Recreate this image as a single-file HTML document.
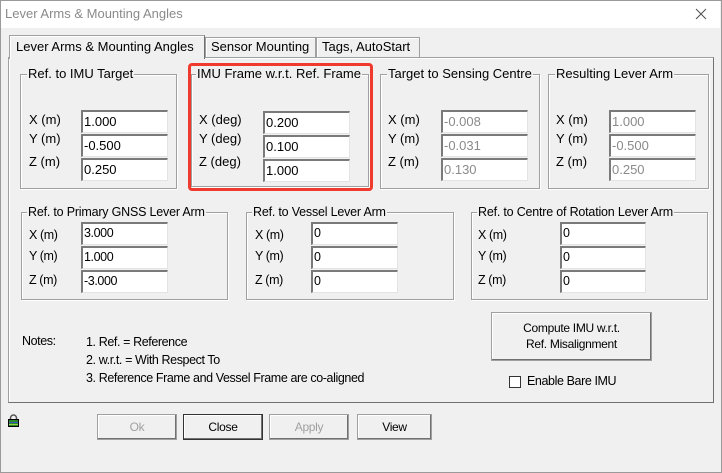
<!DOCTYPE html>
<html><head><meta charset="utf-8"><style>
*{margin:0;padding:0;box-sizing:border-box}
body{width:722px;height:473px;background:#f0f0f0;font-family:"Liberation Sans",Arial,sans-serif;position:relative;overflow:hidden;color:#000}
.a{position:absolute;white-space:nowrap}
.win{position:absolute;left:0;top:0;width:722px;height:473px;border:1px solid #9a9a9a}
.title{position:absolute;left:1px;top:1px;width:719px;height:27px;background:#fff}
.grp{position:absolute;border:1px solid #a0a0a0;box-shadow:1px 1px 0 #fff inset,1px 1px 0 #fff}
.lg{position:absolute;top:-8px;left:6px;background:#f0f0f0;font-size:13px;line-height:14px;padding:0 1px}
.g2 .lg{font-size:12.5px;letter-spacing:-0.2px}
.f{position:absolute;height:23px;background:#fff;border-top:2px solid #7a7a7a;border-left:2px solid #7a7a7a;border-right:1px solid #e3e3e3;border-bottom:1px solid #e3e3e3;font-size:13px;line-height:19px;padding-left:1px}
.dis{color:#8a8a8a}
.l{position:absolute;font-size:13px;white-space:nowrap}
.tab{position:absolute;background:#f0f0f0;border:1px solid #a0a0a0;border-bottom:none;font-size:13px;line-height:18px;padding-left:5px;box-shadow:1px 1px 0 #fff inset}
.btn{position:absolute;height:26px;border:1px solid #a0a0a0;box-shadow:inset -1px -1px 0 #707070,inset 1px 1px 0 #fff;font-size:12px;text-align:center;line-height:24px;letter-spacing:-0.3px}
.sm{font-size:12.5px;letter-spacing:-0.4px}
</style></head><body>
<div class="win"></div>
<div class="title"></div>
<div class="a" style="left:5px;top:6px;font-size:13px;color:#8a8a8a">Lever Arms &amp; Mounting Angles</div>
<svg class="a" style="left:695px;top:8px" width="12" height="12"><path d="M1 1L11 11M11 1L1 11" stroke="#555" stroke-width="1.1"/></svg>

<div class="a" style="left:8px;top:57px;width:706px;height:346px;border:1px solid #a0a0a0;border-right-color:#707070;border-bottom-color:#707070;box-shadow:inset 1px 1px 0 #fff"></div>
<div class="tab" style="left:205px;top:37px;width:111px;height:20px">Sensor Mounting</div>
<div class="tab" style="left:316px;top:37px;width:104px;height:20px">Tags, AutoStart</div>
<div class="tab" style="left:9px;top:35px;width:196px;height:24px;z-index:2;line-height:22px;padding-left:6px;border-right-color:#707070">Lever Arms &amp; Mounting Angles</div>

<div class="grp" style="left:20px;top:74px;width:157px;height:115px"><div class="lg">Ref. to IMU Target</div></div>
<div class="l" style="left:29px;top:112px">X (m)</div><div class="l" style="left:29px;top:131px">Y (m)</div><div class="l" style="left:29px;top:154px">Z (m)</div>
<div class="f" style="left:81px;top:110px;width:87px">1.000</div>
<div class="f" style="left:81px;top:134px;width:87px">-0.500</div>
<div class="f" style="left:81px;top:158px;width:87px">0.250</div>

<div class="grp" style="left:191px;top:74px;width:178px;height:113px"><div class="lg" style="left:4px">IMU Frame w.r.t. Ref. Frame</div></div>
<div class="l" style="left:199px;top:112px">X (deg)</div><div class="l" style="left:199px;top:131px">Y (deg)</div><div class="l" style="left:199px;top:154px">Z (deg)</div>
<div class="f" style="left:263px;top:111px;width:87px">0.200</div>
<div class="f" style="left:263px;top:135px;width:87px">0.100</div>
<div class="f" style="left:263px;top:159px;width:87px">1.000</div>
<div class="a" style="left:188px;top:63px;width:185px;height:128px;border:3px solid #f03a2e;border-radius:4px"></div>

<div class="grp" style="left:380px;top:74px;width:160px;height:115px"><div class="lg">Target to Sensing Centre</div></div>
<div class="l" style="left:388px;top:112px">X (m)</div><div class="l" style="left:388px;top:131px">Y (m)</div><div class="l" style="left:388px;top:154px">Z (m)</div>
<div class="f dis" style="left:441px;top:110px;width:87px">-0.008</div>
<div class="f dis" style="left:441px;top:134px;width:87px">-0.031</div>
<div class="f dis" style="left:441px;top:158px;width:87px">0.130</div>

<div class="grp" style="left:548px;top:74px;width:161px;height:115px"><div class="lg">Resulting Lever Arm</div></div>
<div class="l" style="left:556px;top:112px">X (m)</div><div class="l" style="left:556px;top:131px">Y (m)</div><div class="l" style="left:556px;top:154px">Z (m)</div>
<div class="f dis" style="left:609px;top:110px;width:87px">1.000</div>
<div class="f dis" style="left:609px;top:134px;width:87px">-0.500</div>
<div class="f dis" style="left:609px;top:158px;width:87px">0.250</div>

<div class="grp g2" style="left:21px;top:212px;width:207px;height:88px"><div class="lg" style="left:5px">Ref. to Primary GNSS Lever Arm</div></div>
<div class="l sm" style="left:29px;top:228px">X (m)</div><div class="l sm" style="left:29px;top:249px">Y (m)</div><div class="l sm" style="left:29px;top:273px">Z (m)</div>
<div class="f sm" style="left:81px;top:222px;width:87px">3.000</div>
<div class="f sm" style="left:81px;top:246px;width:87px">1.000</div>
<div class="f sm" style="left:81px;top:270px;width:87px">-3.000</div>

<div class="grp g2" style="left:246px;top:212px;width:208px;height:88px"><div class="lg" style="left:5px">Ref. to Vessel Lever Arm</div></div>
<div class="l sm" style="left:255px;top:228px">X (m)</div><div class="l sm" style="left:255px;top:249px">Y (m)</div><div class="l sm" style="left:255px;top:273px">Z (m)</div>
<div class="f sm" style="left:311px;top:222px;width:87px">0</div>
<div class="f sm" style="left:311px;top:246px;width:87px">0</div>
<div class="f sm" style="left:311px;top:270px;width:87px">0</div>

<div class="grp g2" style="left:471px;top:212px;width:237px;height:88px"><div class="lg" style="left:5px">Ref. to Centre of Rotation Lever Arm</div></div>
<div class="l sm" style="left:478px;top:228px">X (m)</div><div class="l sm" style="left:478px;top:249px">Y (m)</div><div class="l sm" style="left:478px;top:273px">Z (m)</div>
<div class="f sm" style="left:560px;top:222px;width:86px">0</div>
<div class="f sm" style="left:560px;top:246px;width:86px">0</div>
<div class="f sm" style="left:560px;top:270px;width:86px">0</div>

<div class="l sm" style="left:22px;top:334px">Notes:</div>
<div class="l sm" style="left:86px;top:335px">1. Ref. = Reference</div>
<div class="l sm" style="left:86px;top:353px">2. w.r.t. = With Respect To</div>
<div class="l sm" style="left:86px;top:371px">3. Reference Frame and Vessel Frame are co-aligned</div>

<div class="btn" style="left:491px;top:312px;width:161px;height:49px;line-height:16px;padding-top:7px">Compute IMU w.r.t.<br>Ref. Misalignment</div>
<div class="a" style="left:509px;top:376px;width:12px;height:12px;background:#fff;border:1px solid #333"></div>
<div class="l sm" style="left:527px;top:374px">Enable Bare IMU</div>

<div class="btn" style="left:97px;top:414px;width:80px;color:#a0a0a0">Ok</div>
<div class="btn" style="left:183px;top:414px;width:80px;border:1px solid #333">Close</div>
<div class="btn" style="left:269px;top:414px;width:80px;color:#a0a0a0">Apply</div>
<div class="btn" style="left:357px;top:414px;width:75px">View</div>

<svg class="a" style="left:8px;top:414px" width="11" height="13" viewBox="0 0 11 13"><path d="M2.5 6V4a3 3 0 0 1 6 0v2" fill="none" stroke="#555" stroke-width="1.5"/><rect x="0.5" y="5.5" width="10" height="7" fill="#2a8a2a" stroke="#000"/><rect x="1" y="8" width="9" height="1" fill="#3a55c0"/><rect x="1" y="10" width="9" height="1" fill="#9fd04a"/></svg>
</body></html>
